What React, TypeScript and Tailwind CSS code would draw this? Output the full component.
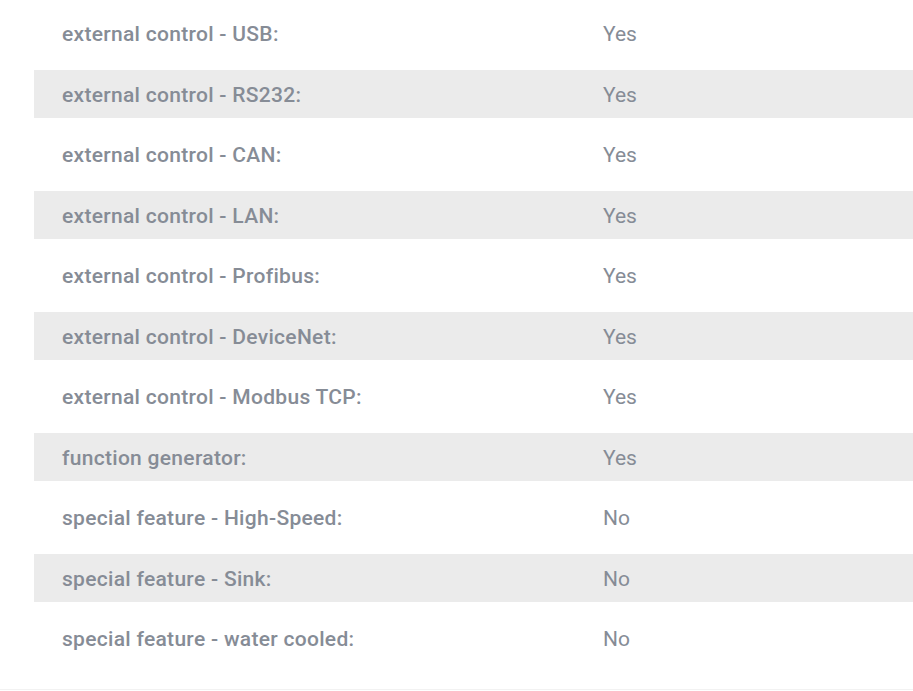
import React from "react";

const specs = [
  { label: "external control - USB:", value: "Yes" },
  { label: "external control - RS232:", value: "Yes" },
  { label: "external control - CAN:", value: "Yes" },
  { label: "external control - LAN:", value: "Yes" },
  { label: "external control - Profibus:", value: "Yes" },
  { label: "external control - DeviceNet:", value: "Yes" },
  { label: "external control - Modbus TCP:", value: "Yes" },
  { label: "function generator:", value: "Yes" },
  { label: "special feature - High-Speed:", value: "No" },
  { label: "special feature - Sink:", value: "No" },
  { label: "special feature - water cooled:", value: "No" },
];

const App = () => {
  return (
    <div className="bg-white w-full min-h-[691px] font-['Roboto',sans-serif] text-[#868c96]">
      <div className="pl-[34px] pt-[9px] pb-[27px] border-b border-[#f2f2f2] flex flex-col gap-[12.5px]">
        {specs.map((row, index) => (
          <div
            key={index}
            className={`h-12 pt-[4px] flex items-center text-[21px] ${index % 2 === 1 ? "bg-[#ebebeb]" : "bg-white"}`}
          >
            <span className="w-[569px] pl-[28px] font-medium tracking-[0.3px]">{row.label}</span>
            <span>{row.value}</span>
          </div>
        ))}
      </div>
    </div>
  );
};

export default App;
